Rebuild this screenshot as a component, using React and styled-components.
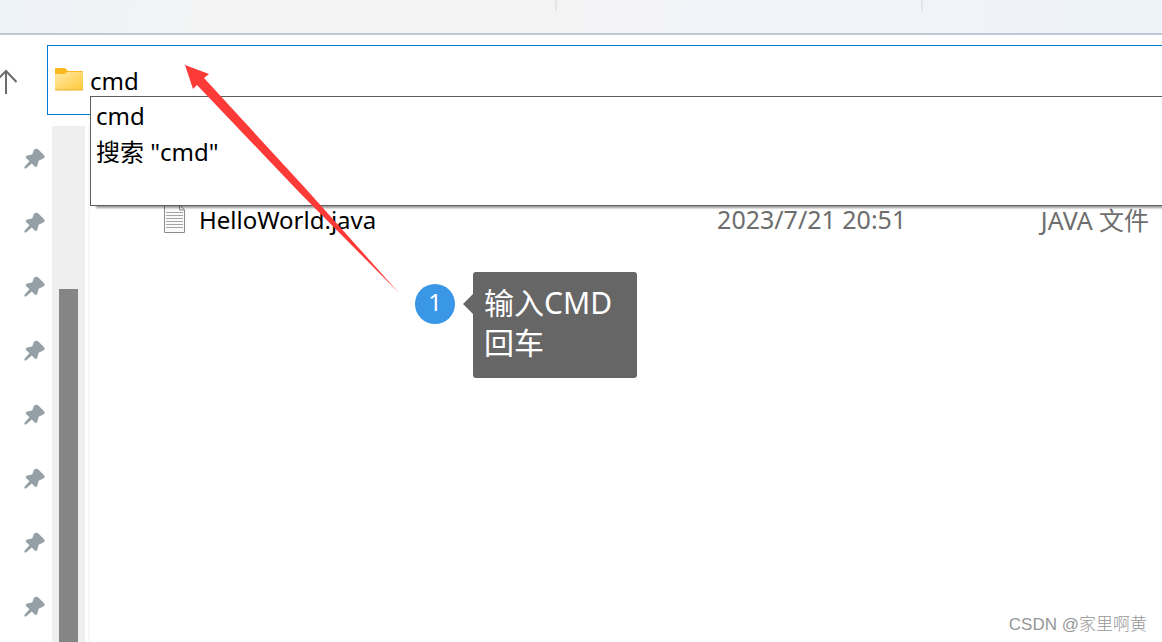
import React, { useState } from "react";
import styled, { createGlobalStyle } from "styled-components";

const GlobalStyle = createGlobalStyle`
    * {
        box-sizing: border-box;
    }

    body {
        margin: 0;
        overflow: hidden;
        background: #fff;
        color: #000;
        font-family: "Noto Sans", "Noto Sans CJK SC", sans-serif;
        font-size: 24px;
    }
`;

const Window = styled.div`
    position: relative;
    display: flex;
    flex-direction: column;
    height: 100vh;
    overflow: hidden;
`;

const Ribbon = styled.header`
    display: grid;
    grid-template-columns: 555fr 366fr 241fr;
    flex: none;
    height: 35px;
    border-bottom: 2px solid #c3c8d6;
    background: linear-gradient(100deg, #eef3f8 0%, #f3f3f3 20%, #f3f3f3 46%, #f2f3f8 60%, #f1f3f9 78%, #edf3f9 100%);
`;

const RibbonGroup = styled.div`
    height: 11px;
    border-left: ${props => props.$divided ? "2px solid #e4e5e9" : "none"};
`;

const AddressRow = styled.div`
    display: flex;
    align-items: center;
    flex: none;
    padding: 10px 0 11px;
`;

const UpButton = styled.button`
    display: flex;
    width: 47px;
    padding: 4px 0 0;
    border: none;
    background: none;
    cursor: pointer;
`;

const AddressBox = styled.div`
    position: relative;
    display: flex;
    align-items: center;
    flex: 1;
    height: 70px;
    padding: 0 0 2px 7px;
    border: 1px solid #0078d4;
    border-right: none;
    background: #fff;
`;

const AddressInput = styled.input`
    flex: 1;
    min-width: 0;
    height: 36px;
    margin-left: 6px;
    padding: 2px 0 0;
    border: none;
    outline: none;
    background: none;
    color: #000;
    font: inherit;
`;

const Suggestions = styled.ul`
    position: absolute;
    z-index: 1;
    top: 50px;
    left: 42px;
    right: 0;
    height: 110px;
    margin: 0;
    padding: 1px 0;
    border: 1px solid #5c605c;
    border-right: none;
    background: #fff;
    box-shadow: 6px 2px 2px rgba(0, 0, 0, .4);
    list-style: none;
`;

const Suggestion = styled.li`
    padding: 0 5px;
    line-height: 36px;
    cursor: default;
`;

const Content = styled.main`
    display: flex;
    flex: 1;
    min-height: 0;
`;

const PinList = styled.nav`
    width: 52px;
    overflow: hidden;
`;

const PinButton = styled.button`
    display: flex;
    justify-content: flex-end;
    align-items: center;
    width: 100%;
    height: 64px;
    padding: 0 7px 0 0;
    border: none;
    background: none;
    cursor: pointer;
`;

const ScrollTrack = styled.div`
    width: 33px;
    padding: 163px 7px 0;
    background: #efefef;
`;

const ScrollThumb = styled.div`
    height: 100%;
    background: #858585;
`;

const FileArea = styled.section`
    flex: 1;
    margin-left: 3px;
    padding-top: 61px;
    border-left: 2px solid #f8f8f8;
`;

const FileTable = styled.table`
    width: 100%;
    table-layout: fixed;
    border-collapse: collapse;
`;

const Cell = styled.td`
    width: ${props => props.$width};
    height: 64px;
    padding: 0;
    color: #6d6d6d;
    font-size: 25px;
    white-space: nowrap;
`;

const FileName = styled.div`
    display: flex;
    align-items: center;
    gap: 13px;
    padding-left: 74px;
    color: #000;
    font-size: 24px;
`;

const Arrow = styled.svg`
    position: absolute;
    z-index: 2;
    top: 64px;
    left: 184px;
    pointer-events: none;
`;

const Note = styled.aside`
    position: absolute;
    z-index: 2;
    top: 272px;
    left: 415px;
    display: flex;
    align-items: flex-start;
    gap: 18px;
    color: #fff;
`;

const Step = styled.span`
    width: 40px;
    height: 40px;
    margin-top: 12px;
    border-radius: 50%;
    background: #3a96e6;
    line-height: 36px;
    text-align: center;
`;

const Bubble = styled.p`
    position: relative;
    width: 164px;
    margin: 0;
    padding: 11px 11px 15px;
    border-radius: 3px;
    background: #666;
    font-size: 30px;
    line-height: 40px;

    &::before {
        content: '';
        position: absolute;
        top: 22px;
        left: -10px;
        border: solid transparent;
        border-width: 10px 10px 10px 0;
        border-right-color: #666;
    }
`;

const Watermark = styled.footer`
    position: absolute;
    right: 15px;
    bottom: 4px;
    color: #969696;
    font-family: "Liberation Sans", "Noto Sans CJK SC", sans-serif;
    font-size: 17px;
    font-weight: 300;
    line-height: 26px;
`;

const pins = ["1", "2", "3", "4", "5", "6", "7", "8"];

const files = [
    { name: "HelloWorld.java", date: "2023/7/21 20:51", type: "JAVA 文件" }
];

const UpIcon = () => (
    <svg width="18" height="26" viewBox="0 0 18 26" fill="none" stroke="#6b6b6b" strokeWidth="2">
        <path d="M6 25V2M-5 13L6 2L16.500 13" />
    </svg>
);

const FolderIcon = () => (
    <svg width="29" height="24" viewBox="0 0 29 24">
        <defs>
            <linearGradient id="folder" x1="0" y1="0" x2="1" y2="1">
                <stop offset="0" stopColor="#ffe9a6" />
                <stop offset="1" stopColor="#ffca3a" />
            </linearGradient>
        </defs>
        <path d="M0 2Q0 1 1 1H9Q10 1 11 2L13 4H27Q28 4 28 5V12H0Z" fill="#fbb91f" />
        <path d="M0 7H9Q10 7 11 6L12 5H27Q28 5 28 6V21Q28 23 27 23H1Q0 23 0 22Z" fill="url(#folder)" />
        <path d="M0 22Q0 23 1 23H27Q28 23 28 22" fill="none" stroke="#e9ab27" />
    </svg>
);

const PinIcon = () => (
    <svg width="21" height="21" viewBox="0 0 62 62" fill="#95a0a6">
        <path d="M29 6Q34 0 41 3L60 22Q63 28 57 31L43 38L39 53Q36 59 31 54L23 46L7 60Q1 63 1 56L16 39L7 30Q3 25 9 22L24 19Z" />
    </svg>
);

const FileIcon = () => (
    <svg width="22" height="30" viewBox="0 0 22 30" fill="none" stroke="#8c8c8c">
        <path d="M.5 .5H15.500L20.500 6V28.500H.5Z" fill="#fafafa" />
        <path d="M15.500 .5V6H20.500" />
        <path d="M2 8.500H19M2 11.500H19M2 14.500H19M2 17.500H19M2 20.500H19M2 23.500H19" stroke="#a5a5a5" />
    </svg>
);

const App = () => {
    const [path, setPath] = useState("cmd");

    return (
        <Window>
            <GlobalStyle />
            <Ribbon>
                <RibbonGroup />
                <RibbonGroup $divided />
                <RibbonGroup $divided />
            </Ribbon>
            <AddressRow>
                <UpButton type="button" aria-label="向上">
                    <UpIcon />
                </UpButton>
                <AddressBox>
                    <FolderIcon />
                    <AddressInput
                        type="text"
                        aria-label="地址"
                        value={path}
                        onChange={e => setPath(e.target.value)}
                    />
                    <Suggestions>
                        <Suggestion>cmd</Suggestion>
                        <Suggestion>搜索 "cmd"</Suggestion>
                    </Suggestions>
                </AddressBox>
            </AddressRow>
            <Content>
                <PinList>
                    {pins.map(pin => (
                        <PinButton key={pin} type="button" aria-label={`固定 ${pin}`}>
                            <PinIcon />
                        </PinButton>
                    ))}
                </PinList>
                <ScrollTrack>
                    <ScrollThumb />
                </ScrollTrack>
                <FileArea>
                    <FileTable>
                        <tbody>
                            {files.map(file => (
                                <tr key={file.name}>
                                    <Cell $width="58.5%">
                                        <FileName>
                                            <FileIcon />
                                            {file.name}
                                        </FileName>
                                    </Cell>
                                    <Cell $width="30.2%">{file.date}</Cell>
                                    <Cell>{file.type}</Cell>
                                </tr>
                            ))}
                        </tbody>
                    </FileTable>
                </FileArea>
            </Content>
            <Arrow width="216" height="230" viewBox="0 0 216 230" fill="#fc3a37">
                <path d="M1 1L25 10L20 14L122 125L215 229L114 127L13 21L9 25Z" />
            </Arrow>
            <Note>
                <Step>1</Step>
                <Bubble>输入CMD<br />回车</Bubble>
            </Note>
            <Watermark>CSDN @家里啊黄</Watermark>
        </Window>
    )
}

export default App;
